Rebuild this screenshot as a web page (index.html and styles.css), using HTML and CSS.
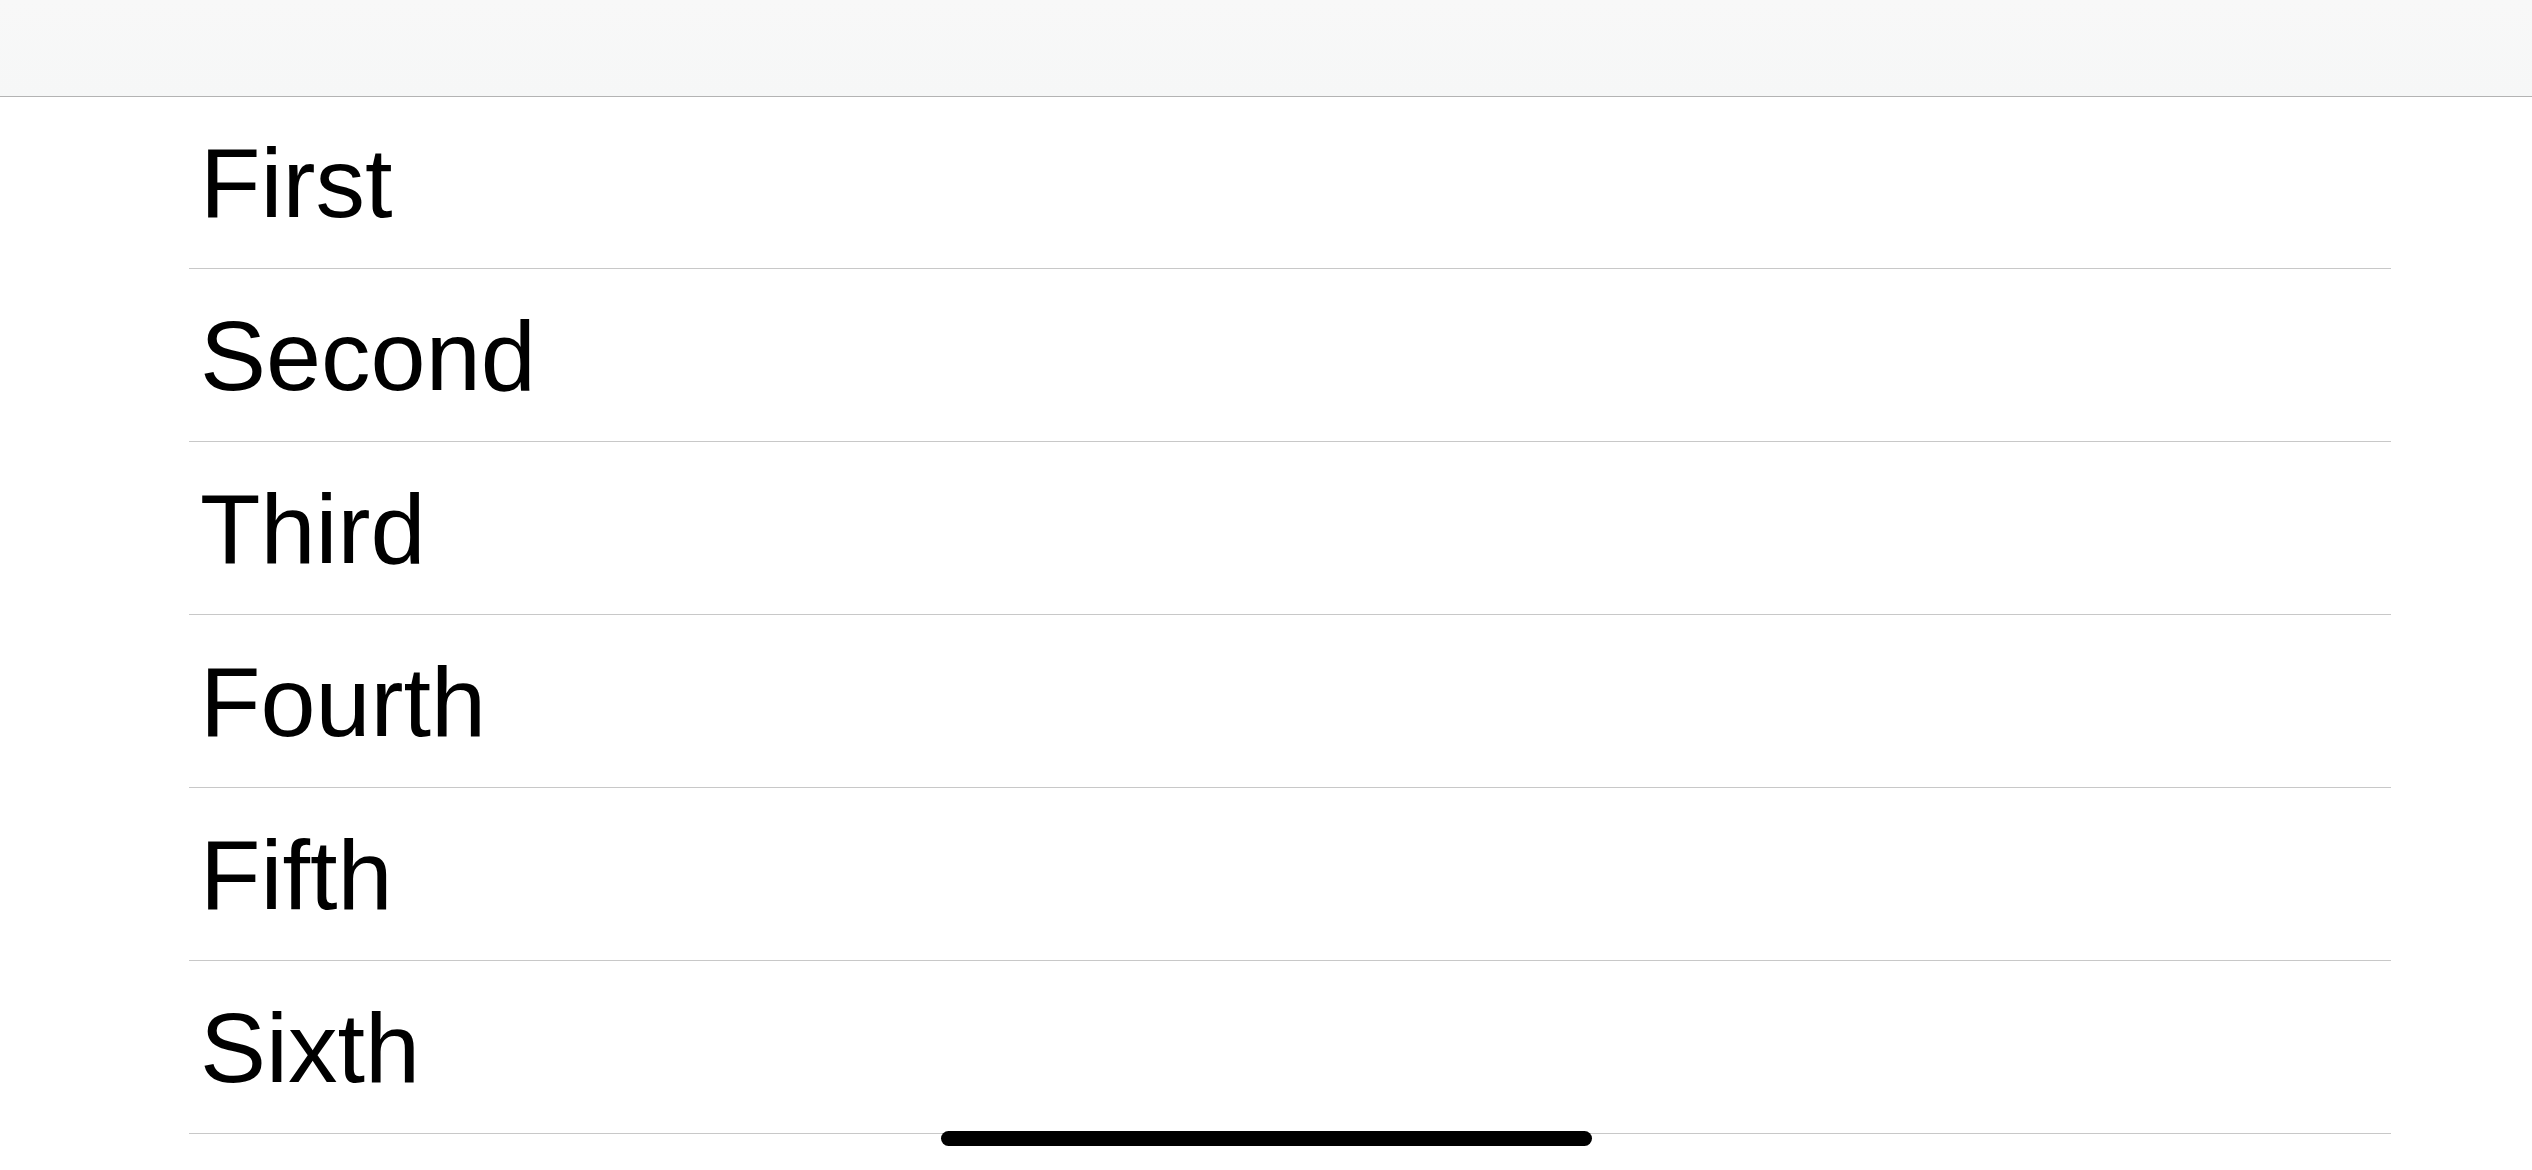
FILE: index.html
```html
<!DOCTYPE html>
<html lang="en">
<head>
<meta charset="utf-8">
<title>List</title>
<link rel="stylesheet" href="styles.css">
</head>
<body>
<div class="screen">
  <header class="navbar"></header>
  <ul class="table">
    <li class="cell cell-first"><span class="label">First</span></li>
    <li class="cell"><span class="label">Second</span></li>
    <li class="cell"><span class="label">Third</span></li>
    <li class="cell"><span class="label">Fourth</span></li>
    <li class="cell"><span class="label">Fifth</span></li>
    <li class="cell"><span class="label">Sixth</span></li>
  </ul>
  <div class="home-indicator"></div>
</div>
</body>
</html>
```
FILE: styles.css
```css
html, body {
  margin: 0;
  padding: 0;
  background: #ffffff;
}
.screen {
  position: relative;
  width: 2532px;
  height: 1170px;
  overflow: hidden;
  background: #ffffff;
  font-family: "Liberation Sans", Arial, sans-serif;
  color: #000000;
}
.navbar {
  height: 96px;
  background: linear-gradient(#f8f8f8, #f6f7f7);
  border-bottom: 1px solid #b3b3b3;
}
.table {
  list-style: none;
  margin: 0 141px 0 189px;
  padding: 0;
}
.cell {
  height: 172px;
  border-bottom: 1px solid #c8c8c8;
  display: flex;
  align-items: center;
  padding-left: 11px;
  box-sizing: content-box;
}
.cell-first {
  height: 171px;
}
.label {
  font-size: 99px;
  line-height: 1;
  white-space: nowrap;
}
.home-indicator {
  position: absolute;
  left: 941px;
  top: 1131px;
  width: 651px;
  height: 15px;
  border-radius: 8px;
  background: #000000;
}
```
